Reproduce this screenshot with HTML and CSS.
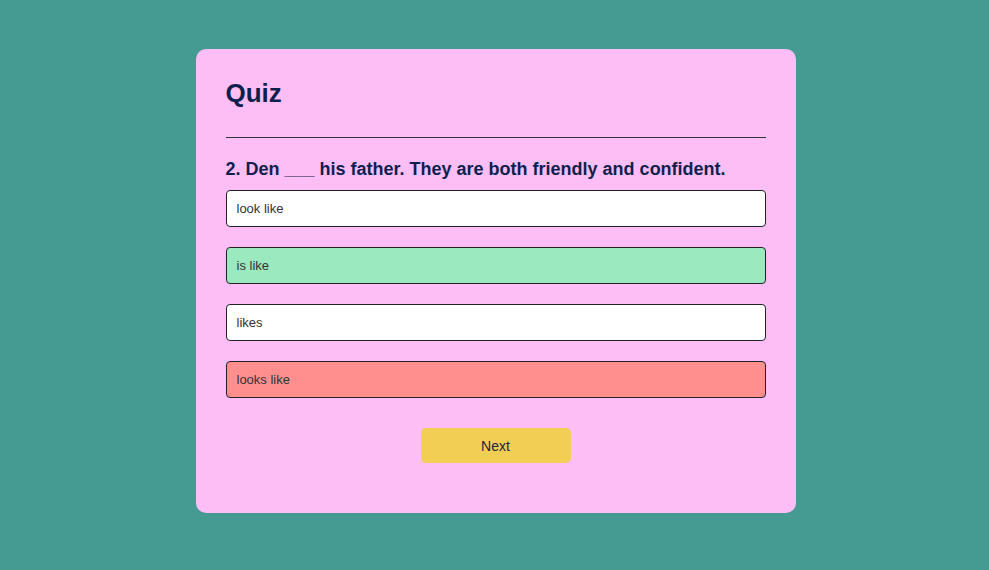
FILE: index.html
```html
<!DOCTYPE html>
<html lang="en">
<head>
<meta charset="utf-8">
<title>Quiz</title>
<link rel="stylesheet" href="styles.css">
</head>
<body>
<main class="card">
  <h1 class="title">Quiz</h1>
  <hr class="divider">
  <h2 class="question">2. Den ___ his father. They are both friendly and confident.</h2>
  <ul class="options">
    <li class="option">look like</li>
    <li class="option correct">is like</li>
    <li class="option">likes</li>
    <li class="option wrong">looks like</li>
  </ul>
  <div class="actions">
    <button class="next">Next</button>
  </div>
</main>
</body>
</html>
```
FILE: styles.css
```css
html, body {
  margin: 0;
  padding: 0;
}
body {
  background: #459b91;
  font-family: "Liberation Sans", Arial, sans-serif;
  height: 570px;
  overflow: hidden;
  padding-left: 2px;
}
.card {
  box-sizing: border-box;
  width: 600px;
  height: 464px;
  margin: 49px auto 0;
  background: #fdbdf5;
  border-radius: 10px;
  padding: 28px 30px 30px;
}
.title {
  margin: 0;
  font-size: 26px;
  line-height: 32px;
  font-weight: bold;
  color: #0d1f4f;
}
.divider {
  border: 0;
  border-top: 1px solid #333;
  margin: 28px 0 0;
}
.question {
  margin: 20px 0 0;
  font-size: 18px;
  line-height: 22px;
  font-weight: bold;
  color: #0d1f4f;
}
.options {
  list-style: none;
  margin: 10px 0 0;
  padding: 0;
  display: flex;
  flex-direction: column;
  gap: 20px;
}
.option {
  box-sizing: border-box;
  height: 37px;
  display: flex;
  align-items: center;
  padding: 0 10px;
  background: #fff;
  border: 1px solid #222;
  border-radius: 4px;
  font-size: 13px;
  color: #333;
}
.option.correct {
  background: #9be9be;
}
.option.wrong {
  background: #ff8f8f;
}
.actions {
  display: flex;
  justify-content: center;
  margin-top: 30px;
}
.next {
  width: 150px;
  height: 35px;
  border: 0;
  border-radius: 5px;
  background: #f2ce55;
  font-family: "Liberation Sans", Arial, sans-serif;
  font-size: 14px;
  color: #224;
}
```
